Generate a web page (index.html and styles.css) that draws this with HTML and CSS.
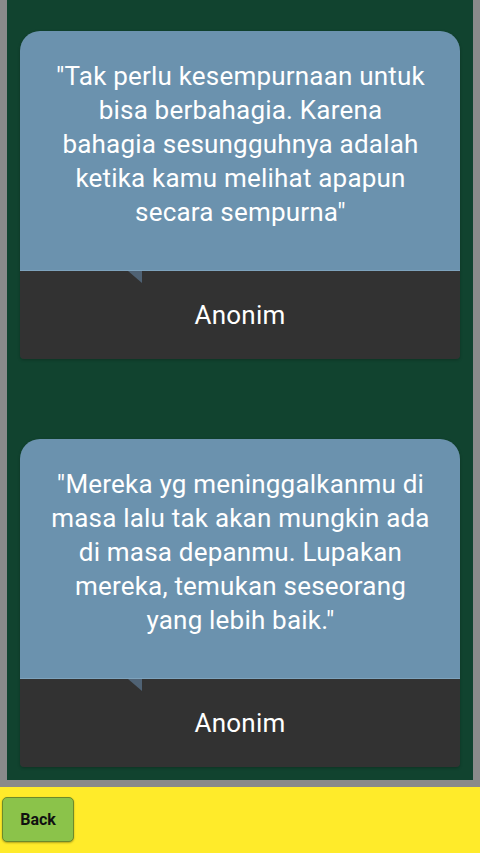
FILE: index.html
```html
<!DOCTYPE html>
<html lang="id">
<head>
<meta charset="utf-8">
<title>Quotes</title>
<link rel="stylesheet" href="styles.css">
</head>
<body>
<div class="frame">
  <div class="scroll">
    <div class="card">
      <div class="quote">"Tak perlu kesempurnaan untuk bisa berbahagia. Karena bahagia sesungguhnya adalah ketika kamu melihat apapun secara sempurna"</div>
      <div class="author"><span class="tail"></span>Anonim</div>
    </div>
    <div class="card">
      <div class="quote">"Mereka yg meninggalkanmu di masa lalu tak akan mungkin ada di masa depanmu. Lupakan mereka, temukan seseorang yang lebih baik."</div>
      <div class="author"><span class="tail"></span>Anonim</div>
    </div>
  </div>
</div>
<div class="footer">
  <button class="back">Back</button>
</div>
</body>
</html>
```
FILE: styles.css
```css
html, body {
  margin: 0;
  padding: 0;
}
body {
  width: 480px;
  height: 853px;
  overflow: hidden;
  font-family: Roboto, "Noto Sans", sans-serif;
}
.frame {
  background: #8a8a8a;
  height: 787px;
  box-sizing: border-box;
  padding: 0 7px 7px 7px;
}
.scroll {
  background: #11432f;
  height: 780px;
  overflow: hidden;
  box-sizing: border-box;
  padding: 31px 13px 0 13px;
  display: flex;
  flex-direction: column;
  gap: 80px;
}
.card {
  border-radius: 20px 20px 4px 4px;
  overflow: hidden;
  flex: none;
  box-shadow: 0 1px 3px rgba(0,0,0,0.25);
}
.quote {
  background: #6b92ae;
  color: #ffffff;
  height: 240px;
  box-sizing: border-box;
  padding: 28px 29px 0 30px;
  font-size: 26px;
  letter-spacing: 0.2px;
  line-height: 34px;
  text-align: center;
  border-bottom: 1px solid #7ea3bd;
}
.author {
  position: relative;
  background: #323232;
  color: #ffffff;
  height: 88px;
  display: flex;
  align-items: center;
  justify-content: center;
  font-size: 26px;
  letter-spacing: 0.2px;
}
.tail {
  position: absolute;
  left: 108px;
  top: 0;
  width: 0;
  height: 0;
  border-top: 12px solid #4f6274;
  border-left: 14px solid transparent;
}
.footer {
  background: #ffeb2a;
  height: 66px;
  box-sizing: border-box;
  padding: 10px 0 0 2px;
}
.back {
  width: 72px;
  height: 45px;
  background: #8bc34a;
  border: 1px solid #6d8a2a;
  border-radius: 5px;
  font-family: Roboto, "Noto Sans", sans-serif;
  font-weight: bold;
  font-size: 16px;
  color: #111;
  padding: 0;
  box-shadow: 0 1px 2px rgba(0,0,0,0.3);
}
```
